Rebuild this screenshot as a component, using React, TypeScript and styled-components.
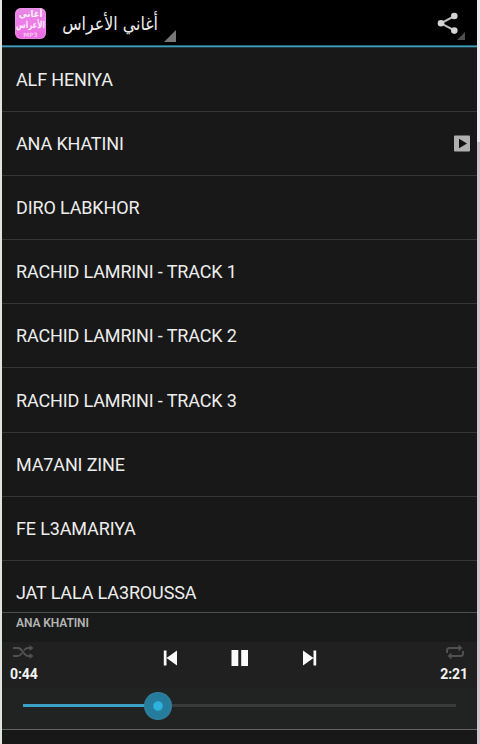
import React from "react";
import styled, { createGlobalStyle } from "styled-components";

const GlobalStyle = createGlobalStyle`
  * { box-sizing: border-box; }
  body { margin: 0; background: #e4e3e1; overflow: hidden; }
`;

const Page = styled.div`
  width: 480px;
  height: 744px;
  padding: 0 3px 0 2px;
  background: linear-gradient(#eeeaed 0 142px, #d0c4ce 142px) right / 3px 100% no-repeat, #e2e2df;
`;

const Screen = styled.main`
  display: flex;
  flex-direction: column;
  height: 744px;
  overflow: hidden;
  background: #181818;
  color: #ededed;
  font-family: Roboto, "Liberation Sans", sans-serif;
`;

const ActionBar = styled.header`
  display: flex;
  flex: none;
  height: 48px;
  padding-left: 13px;
  background: linear-gradient(#000 0 45px, #2b6178 45px 46px, #409bbb 46px 47px, #21404a 47px);
`;

const AppIcon = styled.div`
  flex: none;
  display: flex;
  flex-direction: column;
  align-items: center;
  width: 31px;
  height: 31px;
  margin-top: 8px;
  padding-top: 1px;
  border-radius: 6px;
  background: linear-gradient(#e887e5, #ee7be8 55%, #e968df);
  box-shadow: inset 0 0 2px #f6b3f2;
  color: #fff0ff;
  font: bold 8px/11px "DejaVu Sans", sans-serif;
  white-space: nowrap;
`;

const IconWord = styled.span<{ $tight?: boolean }>`
  font-size: ${(p) => (p.$tight ? 7 : 8.5)}px;
  transform: scaleY(${(p) => (p.$tight ? 1.35 : 1.1)});
`;

const IconCaption = styled.span`
  font-size: 6px;
  line-height: 7px;
  color: #f9c0f4;
`;

const Title = styled.h1`
  width: 97px;
  height: 46px;
  margin: 0 0 0 15px;
  color: #ededed;
  font: 400 15.9px/47px "DejaVu Sans", sans-serif;
  transform: scaleY(1.18);
  white-space: nowrap;
`;

const Corner = styled.span<{ $size: number; $top: number; $left: number }>`
  flex: none;
  width: ${(p) => p.$size}px;
  height: ${(p) => p.$size}px;
  margin: ${(p) => p.$top}px 0 0 ${(p) => p.$left}px;
  background: #777;
  opacity: ${(p) => (p.$size > 10 ? 1 : 0.65)};
  clip-path: polygon(100% 0, 100% 100%, 0 100%);
`;

const Share = styled.button`
  display: flex;
  margin: 0 12px 0 auto;
  padding: 0;
  border: 0;
  background: none;
`;

const ShareIcon = styled.svg`
  margin: 12px 0 0;
`;

const TrackList = styled.ul`
  flex: none;
  height: 564px;
  margin: 0;
  padding: 0;
  overflow: hidden;
  list-style: none;
`;

const TrackRow = styled.li`
  display: flex;
  align-items: center;
  justify-content: space-between;
  height: 64.1px;
  padding: 0 7px 0 14px;
  border-bottom: 1px solid #363636;
  font-size: 18px;
  letter-spacing: -0.14px;
  white-space: nowrap;
`;

const Player = styled.section`
  flex: none;
  height: 118px;
  border-top: 1px solid #4c504e;
  border-bottom: 1px solid #626462;
  background: #202020;
`;

const NowPlaying = styled.div`
  height: 29px;
  padding-left: 14px;
  background: #181b19;
  color: #b4b4b4;
  font-size: 12px;
  font-weight: 600;
  letter-spacing: -0.1px;
  line-height: 21px;
`;

const Controls = styled.div`
  display: flex;
  justify-content: space-between;
  height: 46px;
`;

const Side = styled.div<{ $end?: boolean }>`
  display: flex;
  flex-direction: column;
  align-items: ${(p) => (p.$end ? "flex-end" : "flex-start")};
  width: 60px;
  padding: ${(p) => (p.$end ? "2px 9px 0 0" : "2px 0 0 8px")};
`;

const ModeIcon = styled.svg<{ $end?: boolean }>`
  flex: none;
  margin: ${(p) => (p.$end ? "0 3px 0 0" : "0 0 0 2px")};
`;

const Time = styled.time`
  color: #f4f4f4;
  font-size: 14px;
  font-weight: 700;
  letter-spacing: -0.1px;
  line-height: 18px;
  margin-top: 5px;
`;

const Transport = styled.div`
  display: flex;
  justify-content: space-between;
  width: 154px;
  padding-top: 7px;
`;

const Seek = styled.div`
  display: flex;
  align-items: center;
  height: 41px;
  padding: 0 21px 6px;
  background: #202321;
`;

const Rail = styled.div`
  position: relative;
  width: 434px;
  height: 3px;
  background: #393b3a;
`;

const Progress = styled.div`
  width: 136px;
  height: 3px;
  background: #3ba0c5;
`;

const Thumb = styled.span`
  position: absolute;
  top: -12.5px;
  left: 121px;
  width: 28px;
  height: 28px;
  border-radius: 50%;
  background: radial-gradient(circle, #2eb2df 0 4px, #267c9c 5.5px 12px, #337f9b 14px);
`;

const tracks = [
  "ALF HENIYA",
  "ANA KHATINI",
  "DIRO LABKHOR",
  "RACHID LAMRINI - TRACK 1",
  "RACHID LAMRINI - TRACK 2",
  "RACHID LAMRINI - TRACK 3",
  "MA7ANI ZINE",
  "FE L3AMARIYA",
  "JAT LALA LA3ROUSSA",
];

const PlayingBadge = () => (
  <svg width="17" height="17" viewBox="0 0 17 17">
    <rect x="1" y=".5" width="16" height="16" rx="1" fill="#b0b0b0" />
    <path d="M6 3.800v9.400l8-4.700z" fill="#111" />
  </svg>
);

export default function App() {
  return (
    <Page>
      <GlobalStyle />
      <Screen>
        <ActionBar>
          <AppIcon dir="rtl">
            <IconWord>أغاني</IconWord>
            <IconWord $tight>الأعراس</IconWord>
            <IconCaption>MP3</IconCaption>
          </AppIcon>
          <Title dir="rtl">أغاني الأعراس</Title>
          <Corner $size={12} $top={30} $left={6} />
          <Share aria-label="Share">
            <ShareIcon width="22" height="23" viewBox="0 0 22 23">
              <path d="M17.500 4 4 11.300l13.500 7.200" fill="none" stroke="#bcbcbc" strokeWidth="2" />
              <circle cx="17.300" cy="4" r="3.300" fill="#d4d4d4" />
              <circle cx="4" cy="11.300" r="3.300" fill="#d4d4d4" />
              <circle cx="17.300" cy="18.600" r="3.300" fill="#d4d4d4" />
            </ShareIcon>
            <Corner $size={8} $top={32} $left={-2} />
          </Share>
        </ActionBar>
        <TrackList>
          {tracks.map((track) => (
            <TrackRow key={track}>
              <span>{track}</span>
              {track === "ANA KHATINI" && <PlayingBadge />}
            </TrackRow>
          ))}
        </TrackList>
        <Player>
          <NowPlaying>ANA KHATINI</NowPlaying>
          <Controls>
            <Side>
              <ModeIcon width="23" height="16" viewBox="0 0 23 16" fill="none" stroke="#505050" strokeWidth="2">
                <path d="M1 4h5c5 0 5 8 10 8h2M1 12h5c2 0 3-1.500 4-3M12 6.500c1-1.500 2-2.500 4-2.500h2" />
                <path d="M17.500 1l4 3-4 3zM17.500 9l4 3-4 3z" fill="#505050" stroke="none" />
              </ModeIcon>
              <Time>0:44</Time>
            </Side>
            <Transport>
              <svg width="15" height="18" viewBox="0 0 15 18" fill="#fafafa">
                <path d="M.8 1.500h2.700v15H.8zM14 1.500v15L3.500 9z" />
              </svg>
              <svg width="18" height="18" viewBox="0 0 18 18" fill="#fafafa">
                <path d="M.5 1h6.800v16H.5zM10.200 1H17v16h-6.800z" />
              </svg>
              <svg width="15" height="18" viewBox="0 0 15 18" fill="#fafafa">
                <path d="M11.500 1.500h2.700v15h-2.700zM1 1.500v15L11.500 9z" />
              </svg>
            </Transport>
            <Side $end>
              <ModeIcon $end width="20" height="16" viewBox="0 0 20 16" fill="none" stroke="#505050" strokeWidth="2">
                <path d="M2 9V6.500Q2 4 4.500 4H15M18 7v2.500q0 2.500-2.500 2.500H5" />
                <path d="M13.500.500l4 3.500-4 3.500zM6.500 8.500l-4 3.500 4 3.500z" fill="#505050" stroke="none" />
              </ModeIcon>
              <Time>2:21</Time>
            </Side>
          </Controls>
          <Seek>
            <Rail>
              <Progress />
              <Thumb />
            </Rail>
          </Seek>
        </Player>
      </Screen>
    </Page>
  );
}
